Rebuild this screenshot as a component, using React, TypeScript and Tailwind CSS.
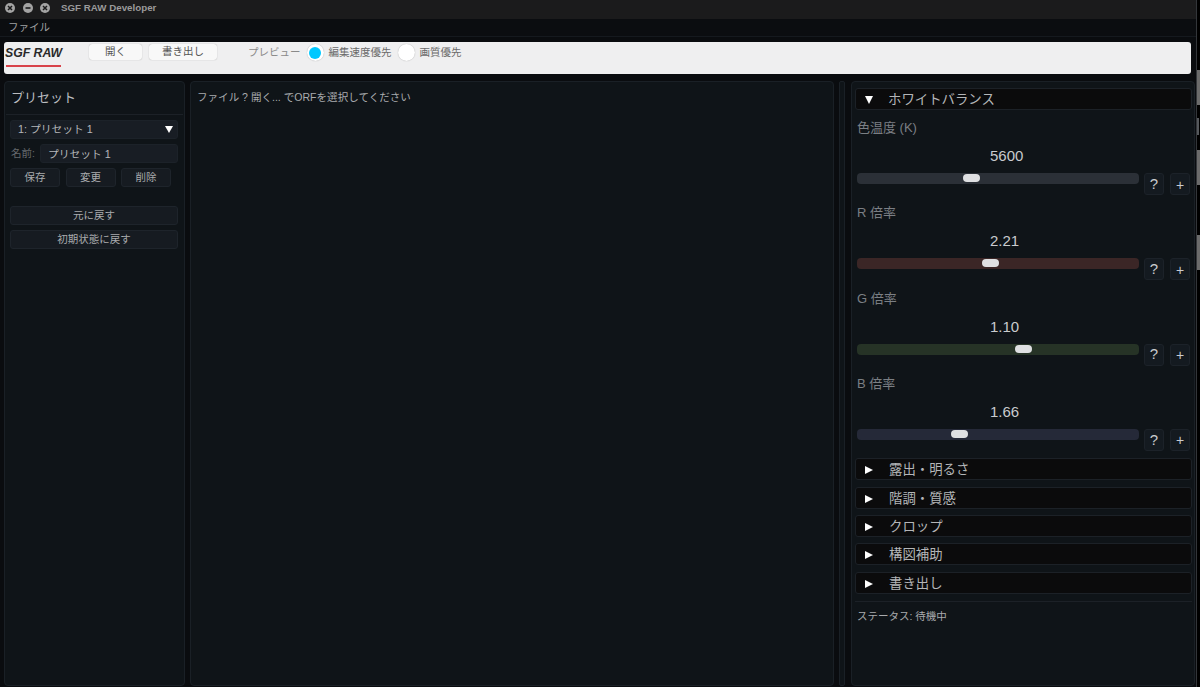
const font = "font-['Liberation_Sans','Noto_Sans_CJK_JP',sans-serif]";

function Slider({ label, value, track, pos }: { label: string; value: string; track: string; pos: number }) {
  return (
    <div className="h-[85.3px] shrink-0">
      <div className="h-[22px] pl-[2px] pt-[3px] text-[13px] leading-[18px] text-[#7b7f84]">{label}</div>
      <div className="h-[26px] pl-[135px] pt-[8px] text-[15px] leading-[20px] text-[#c9cbce]">{value}</div>
      <div className="flex items-start pl-[2px] pt-[9px]">
        <div className={`relative h-[11px] w-[282px] shrink-0 rounded-[4px] ${track}`}>
          <div className="absolute top-[1px] h-[8px] w-[17px] rounded-[4px] bg-[#dfe0e2]" style={{ left: pos }} />
        </div>
        <div className="ml-[5px] flex h-[22px] w-[20px] shrink-0 items-center justify-center rounded-[3px] border border-[#1c2229] bg-[#141a20] text-[15px] text-[#c9cbce]">?</div>
        <div className="ml-[6px] flex h-[22px] w-[20px] shrink-0 items-center justify-center rounded-[3px] border border-[#1c2229] bg-[#141a20] pt-[2px] text-[14px] text-[#c9cbce]">+</div>
      </div>
    </div>
  );
}

function Section({ label, open }: { label: string; open?: boolean }) {
  return (
    <div className="flex h-[22px] shrink-0 items-center rounded-[3px] border border-[#1c2127] bg-[#0b0b0c] pt-[2px] text-[13.4px] text-[#b4b6b8]">
      <span className={`ml-[9px] h-0 w-0 ${open ? "border-x-[4.5px] border-t-[8px] border-x-transparent border-t-white" : "border-y-[4.5px] border-l-[8px] border-y-transparent border-l-white"}`} />
      <span className={open ? "ml-[15px]" : "ml-[16px]"}>{label}</span>
    </div>
  );
}

function DarkButton({ label, className }: { label: string; className: string }) {
  return (
    <div className={`flex h-[19px] items-center justify-center rounded-[3px] border border-[#1e242b] bg-[#161b21] text-[10.5px] text-[#a9abae] ${className}`}>{label}</div>
  );
}

function WindowDot({ kind }: { kind: "close" | "min" | "max" }) {
  return (
    <svg width="10" height="10" viewBox="0 0 10 10">
      <circle cx="5" cy="5" r="5" fill="#a3a3a3" />
      {kind === "min" ? (
        <path d="M2.5 5h5" stroke="#1b1b1c" strokeWidth="1.6" />
      ) : (
        <path d="M3 3l4 4M7 3l-4 4" stroke="#1b1b1c" strokeWidth="1.5" />
      )}
    </svg>
  );
}

export default function App() {
  return (
    <div className={`${font} flex h-[687px] w-[1200px] overflow-hidden bg-black`}>
      <div className="flex h-full w-[1197px] shrink-0 flex-col border-r border-[#33363a] bg-[#0a0c0f]">
        {/* title bar */}
        <div className="flex h-[19px] shrink-0 items-center bg-[#1b1b1c] pb-[3px] pl-[5px]">
          <div className="flex gap-[7.5px]">
            <WindowDot kind="close" />
            <WindowDot kind="min" />
            <WindowDot kind="max" />
          </div>
          <span className="ml-[11px] text-[9.75px] font-bold text-[#9a9a9a]">SGF RAW Developer</span>
        </div>
        {/* menu */}
        <div className="flex h-[18px] shrink-0 items-center border-b border-[#15191e] bg-[#0b0d10] pl-[8px] text-[10.5px] text-[#a0a2a4]">ファイル</div>
        {/* toolbar */}
        <div className="mx-[4px] mt-[5px] flex h-[32px] w-[1187px] shrink-0 items-start rounded-[3px] bg-[#efeff0] pl-[1px] pt-[2px] text-[10.5px] text-[#6a6a6a]">
          <div className="relative h-[20px] w-[84px]">
            <span className="text-[12.25px] font-bold italic leading-[18px] text-[#2a2a2a]">SGF RAW</span>
            <div className="absolute left-[1px] top-[21px] h-[2px] w-[55px] bg-[#d8434a]" />
          </div>
          <div className="flex h-[16px] w-[53px] items-center justify-center rounded-[3px] bg-[#f8f8f8] text-[#555] shadow-[0_0_1px_#999]">開く</div>
          <div className="ml-[7px] flex h-[16px] w-[68px] items-center justify-center rounded-[3px] bg-[#f8f8f8] text-[#555] shadow-[0_0_1px_#999]">書き出し</div>
          <span className="ml-[31px] leading-[16px] text-[#8a8a8a]">プレビュー</span>
          <span className="ml-[6px] flex h-[17px] w-[17px] items-center justify-center rounded-full bg-white shadow-[0_0_1px_#999]">
            <span className="h-[12px] w-[12px] rounded-full bg-[#00c8ff]" />
          </span>
          <span className="ml-[5px] leading-[16px]">編集速度優先</span>
          <span className="ml-[6px] h-[17px] w-[17px] rounded-full bg-white shadow-[0_0_1px_#999]" />
          <span className="ml-[5px] leading-[16px]">画質優先</span>
        </div>
        {/* panels */}
        <div className="mb-px mt-[7px] flex min-h-0 flex-1 pl-[4px]">
          <div className="flex w-[181px] shrink-0 flex-col rounded-[4px] border border-[#1a2026] bg-[#0f1418] px-[1px]">
            <div className="h-[33px] shrink-0 border-b border-[#1c2127] pl-[5px] pt-[6px] text-[13px] leading-[20px] text-[#bbbdc0]">プリセット</div>
            <div className="flex flex-col pl-[4px] pr-[5px] pt-[5px]">
              <div className="flex h-[19px] items-center justify-between rounded-[3px] border border-[#1c2229] bg-[#181d24] pl-[7px] pr-[4px] text-[10.75px] text-[#b5b7ba]">
                <span>1: プリセット 1</span>
                <span className="h-0 w-0 border-x-[4px] border-t-[7px] border-x-transparent border-t-white" />
              </div>
              <div className="mt-[5px] flex items-center">
                <span className="w-[30px] pl-[1px] pt-[1px] text-[10.5px] text-[#66696d]">名前:</span>
                <div className="flex h-[19px] flex-1 items-center rounded-[3px] border border-[#1c2229] bg-[#181d24] pl-[7px] pt-[1px] text-[10.75px] text-[#b5b7ba]">プリセット 1</div>
              </div>
              <div className="mt-[5px] flex gap-[5.5px]">
                <DarkButton label="保存" className="w-[50px] pt-[1px]" />
                <DarkButton label="変更" className="w-[50px] pt-[1px]" />
                <DarkButton label="削除" className="w-[50px] pt-[1px]" />
              </div>
              <DarkButton label="元に戻す" className="mt-[19px]" />
              <DarkButton label="初期状態に戻す" className="mt-[5px]" />
            </div>
          </div>
          <div className="ml-[5px] w-[644px] shrink-0 rounded-[4px] border border-[#1a2026] bg-[#0f1418] pl-[6px] pt-[7px] text-[10.55px] leading-[16px] text-[#a9abae]">
            ファイル ? 開く... でORFを選択してください
          </div>
          <div className="ml-[5px] w-[6px] shrink-0 rounded-[2px] border border-[#1a2026] bg-[#0f1418]" />
          <div className="ml-[6px] flex w-[344px] shrink-0 flex-col rounded-[4px] border border-[#1a2026] bg-[#0f1418] pl-[3px] pr-[2px] pt-[6px]">
            <Section label="ホワイトバランス" open />
            <div className="h-[6px] shrink-0" />
            <Slider label="色温度 (K)" value="5600" track="bg-[#2b3037]" pos={106} />
            <Slider label="R 倍率" value="2.21" track="bg-[#3b2626]" pos={125} />
            <Slider label="G 倍率" value="1.10" track="bg-[#263326]" pos={158} />
            <Slider label="B 倍率" value="1.66" track="bg-[#252938]" pos={94} />
            <div className="mt-px flex flex-col gap-[6.4px]">
              <Section label="露出・明るさ" />
              <Section label="階調・質感" />
              <Section label="クロップ" />
              <Section label="構図補助" />
              <Section label="書き出し" />
            </div>
            <div className="mt-[7px] border-t border-[#1c2127] pl-[2px] pt-[6px] text-[10.5px] leading-[16px] text-[#a9abae]">ステータス: 待機中</div>
          </div>
        </div>
      </div>
      {/* sliver of the desktop behind the window */}
      <div className="flex w-[3px] shrink-0 flex-col">
        <div className="mt-[70px] h-[35px] bg-[#6b6b6b]" />
        <div className="mt-[13px] h-[17px] w-[2px] bg-[#55585c]" />
        <div className="mt-[15px] h-[35px] bg-[#6b6b6b]" />
        <div className="mt-[50px] h-[35px] bg-[#6b6b6b]" />
      </div>
    </div>
  );
}
